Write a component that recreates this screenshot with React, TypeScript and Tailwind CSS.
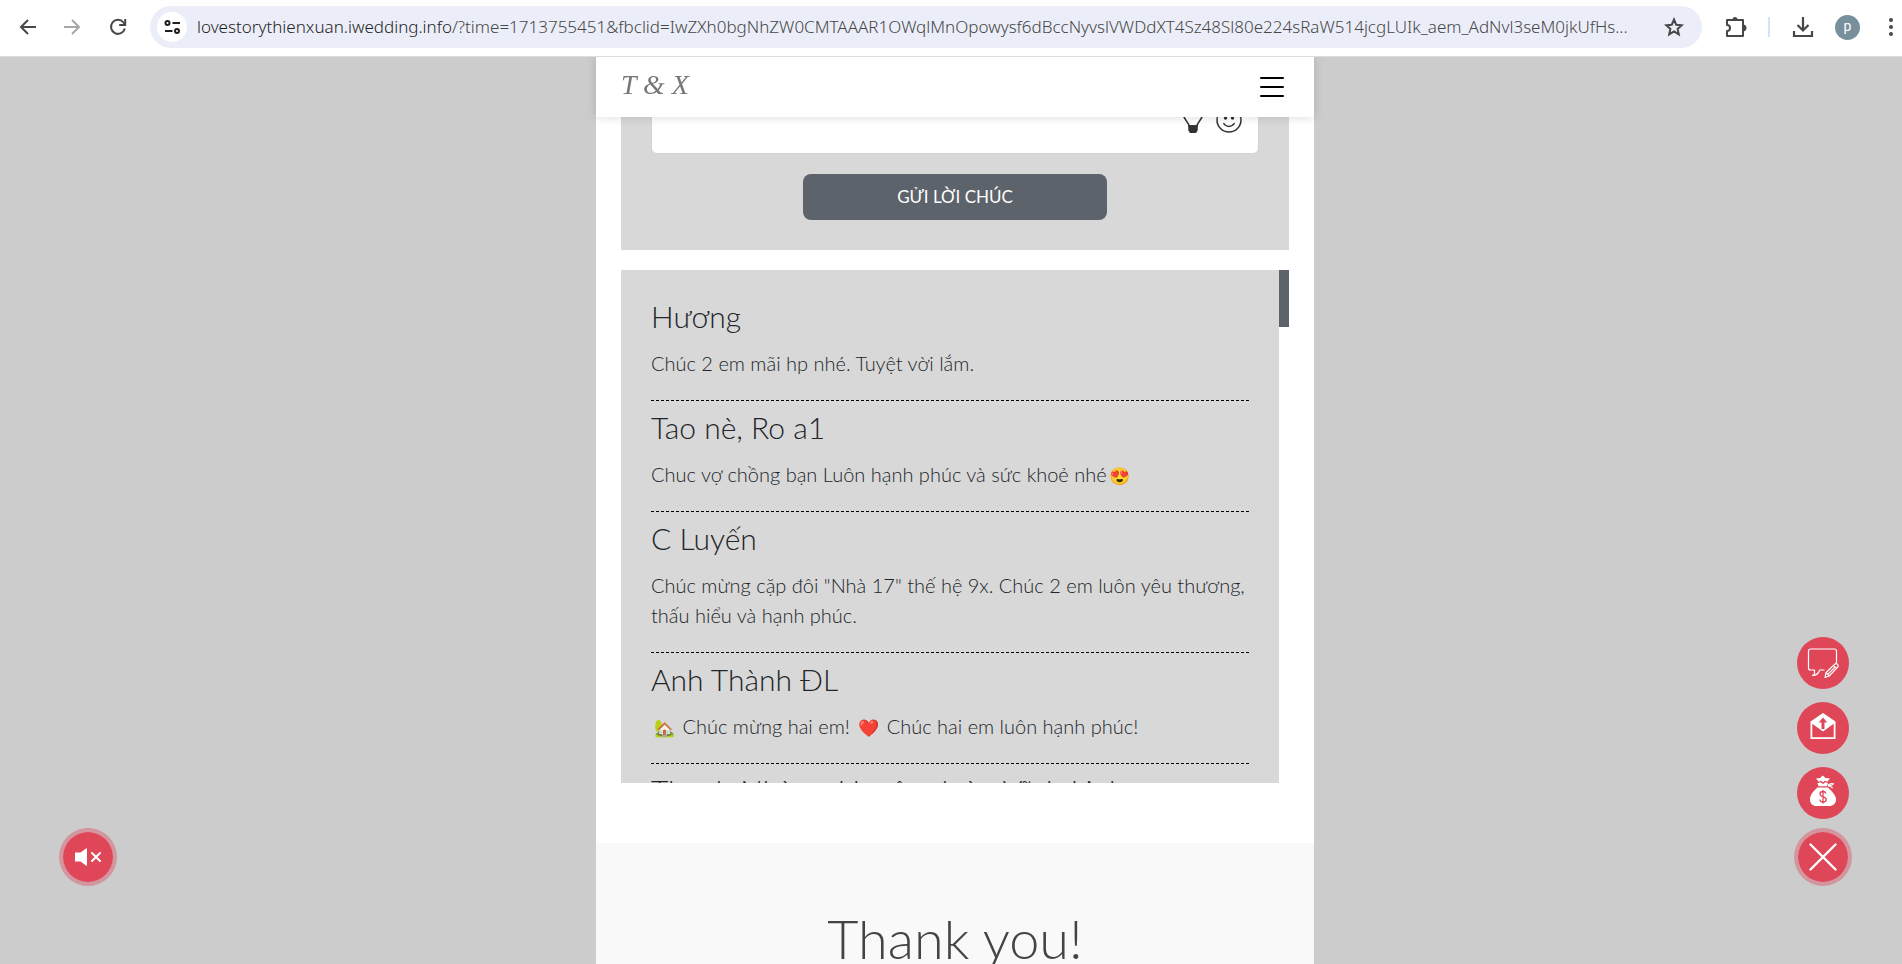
import React from "react";

interface Wish {
  name: string;
  message: React.ReactNode;
}

const Emoji: React.FC<{ children: string }> = ({ children }) => (
  <span className="inline-block w-[26px] text-center text-[17px] leading-none">{children}</span>
);

const wishes: Wish[] = [
  { name: "Hương", message: "Chúc 2 em mãi hp nhé. Tuyệt vời lắm." },
  {
    name: "Tao nè, Ro a1",
    message: (
      <>
        Chuc vợ chồng bạn Luôn hạnh phúc và sức khoẻ nhé
        <Emoji>😍</Emoji>
      </>
    ),
  },
  {
    name: "C Luyến",
    message: 'Chúc mừng cặp đôi "Nhà 17" thế hệ 9x. Chúc 2 em luôn yêu thương, thấu hiểu và hạnh phúc.',
  },
  {
    name: "Anh Thành ĐL",
    message: (
      <>
        <Emoji>🏡</Emoji> Chúc mừng hai em! <Emoji>❤️</Emoji> Chúc hai em luôn hạnh phúc!
      </>
    ),
  },
  { name: "Thanh Nhàn - Huyên đoàn Vĩnh Linh", message: "" },
];

const pageUrl =
  "/?time=1713755451&fbclid=IwZXh0bgNhZW0CMTAAAR1OWqlMnOpowysf6dBccNyvslVWDdXT4Sz48Sl80e224sRaW514jcgLUIk_aem_AdNvl3seM0jkUfHs...";

const BrowserBar = () => (
  <div className="flex h-[57px] shrink-0 items-center border-b border-[#dddddd] bg-white pb-[2px] text-[#474747]">
    <button aria-label="Back" className="ml-4 flex size-6 items-center justify-center">
      <svg width="18" height="18" viewBox="0 0 18 18" fill="none" stroke="currentColor" strokeWidth="2">
        <path d="M17 9H2.5M9 2 2 9l7 7" />
      </svg>
    </button>
    <button aria-label="Forward" className="ml-5 flex size-6 items-center justify-center text-[#a6a6a6]">
      <svg width="18" height="18" viewBox="0 0 18 18" fill="none" stroke="currentColor" strokeWidth="2">
        <path d="M1 9h14.500M9 2l7 7-7 7" />
      </svg>
    </button>
    <button aria-label="Reload" className="ml-[22px] flex size-6 items-center justify-center">
      <svg width="18" height="18" viewBox="0 0 18 18" fill="none" stroke="currentColor" strokeWidth="2">
        <path d="M15.800 10.500A7 7 0 1 1 14.500 4.500L16 6.500" />
        <path d="M16.200 1v6h-6" />
      </svg>
    </button>
    <div className="ml-5 flex h-[42px] min-w-0 flex-1 items-center rounded-full bg-[#ebeef8] pl-[7px] pr-4">
      <button aria-label="Site information" className="flex size-[30px] shrink-0 items-center justify-center rounded-full bg-white text-[#1f1f1f]">
        <svg width="17" height="14" viewBox="0 0 17 14" fill="none" stroke="currentColor" strokeWidth="2">
          <circle cx="3.500" cy="3" r="2" />
          <path d="M8.500 3H16M1 11h7.500" />
          <circle cx="13" cy="11" r="2" />
        </svg>
      </button>
      <span className="ml-[10px] min-w-0 flex-1 overflow-hidden whitespace-nowrap font-['Noto_Sans',sans-serif] text-[17px] font-light">
        <span className="text-[#1f1f1f]">lovestorythienxuan.iwedding.info</span>
        {pageUrl}
      </span>
      <button aria-label="Bookmark" className="ml-3 flex size-6 shrink-0 items-center justify-center">
        <svg width="20" height="20" viewBox="0 0 20 20" fill="none" stroke="currentColor" strokeWidth="2">
          <path d="m10 2.500 2.200 5.200 5.600.5-4.200 3.700 1.200 5.500L10 14.500l-4.800 2.900 1.200-5.500-4.200-3.700 5.600-.5z" />
        </svg>
      </button>
    </div>
    <button aria-label="Extensions" className="ml-[22px] flex size-6 shrink-0 items-center justify-center">
      <svg width="22" height="24" viewBox="0 0 22 24" fill="none" stroke="currentColor" strokeWidth="2">
        <path d="M2 5h16v5.500a2.600 2.600 0 0 1 0 5V21H2v-5a2.900 2.900 0 0 0 0-6z" strokeLinejoin="round" />
        <path d="M7.500 4.500a2.500 2.500 0 0 1 5 0z" fill="currentColor" stroke="none" />
        <path d="M18 10.500a2.500 2.500 0 0 1 0 5z" fill="currentColor" />
      </svg>
    </button>
    <span className="ml-5 h-5 w-[2px] shrink-0 bg-[#d3e3fd]" />
    <button aria-label="Downloads" className="ml-[21px] flex size-6 shrink-0 items-center justify-center">
      <svg width="22" height="22" viewBox="0 0 22 22" fill="none" stroke="currentColor" strokeWidth="2.200">
        <path d="M11 1v13M5.500 9 11 14.500 16.500 9M2 15v5h18v-5" />
      </svg>
    </button>
    <button className="ml-5 flex size-[25px] shrink-0 items-center justify-center rounded-full bg-[#78909c] pb-[2px] font-['Roboto',sans-serif] text-sm leading-none text-white">
      p
    </button>
    <button aria-label="Menu" className="ml-[25px] mr-[5px] flex w-3 shrink-0 justify-center">
      <svg width="4" height="18" viewBox="0 0 4 18" fill="currentColor">
        <circle cx="2" cy="2" r="2" />
        <circle cx="2" cy="9" r="2" />
        <circle cx="2" cy="16" r="2" />
      </svg>
    </button>
  </div>
);

const Header = () => (
  <header className="sticky top-0 z-10 flex h-[60px] items-center justify-between bg-white pl-[25px] pr-7 shadow-[0_0_10px_rgba(0,0,0,0.15)]">
    <a href="#top" className="pb-1 font-['Liberation_Serif',cursive] text-[28px] italic leading-none text-[#777777]">
      T &amp; X
    </a>
    <button aria-label="Open navigation" className="flex w-[28px] flex-col items-center gap-[7px]">
      <span className="h-[2px] w-6 rounded-full bg-black" />
      <span className="h-[2px] w-6 rounded-full bg-black" />
      <span className="h-[2px] w-6 rounded-full bg-black" />
    </button>
  </header>
);

const WishForm = () => (
  <form className="mx-[25px] -mt-[60px] flex flex-col items-center bg-[#d8d8d8] px-[30px] pb-[30px] pt-2" onSubmit={(e) => e.preventDefault()}>
    <div className="relative w-full">
      <textarea aria-label="Lời chúc" className="block h-[89px] w-full resize-none rounded-md border border-[#ced4da] bg-white p-3 outline-none" />
      <div className="absolute bottom-[21px] right-[17px] flex items-end gap-3 text-[#333333]">
        <button type="button" aria-label="Gợi ý lời chúc">
          <svg width="22" height="28" viewBox="0 0 22 28" fill="none" stroke="currentColor" strokeWidth="1.500">
            <path d="M7 21c0-4-5.500-6-5.500-11.500a9.500 9.500 0 0 1 19 0C20.500 15 15 17 15 21z" />
            <path d="M7 21h8v4l-1.500 2.500h-5L7 25z" fill="currentColor" />
          </svg>
        </button>
        <button type="button" aria-label="Biểu tượng cảm xúc">
          <svg width="26" height="26" viewBox="0 0 26 26" fill="none" stroke="currentColor" strokeWidth="1.500">
            <circle cx="13" cy="13" r="12" />
            <circle cx="9.500" cy="11" r="1.700" fill="currentColor" stroke="none" />
            <circle cx="16.500" cy="11" r="1.700" fill="currentColor" stroke="none" />
            <path d="M7.500 16c2.500 4.500 8.500 4.500 11 0" />
          </svg>
        </button>
      </div>
    </div>
    <button type="submit" className="mt-5 h-[46px] w-1/2 rounded-lg bg-[#5d636b] pb-px text-[17px] font-normal text-white">
      GỬI LỜI CHÚC
    </button>
  </form>
);

const WishList = () => (
  <section className="mx-[25px] mb-[60px] mt-5 flex items-start">
    <div className="max-h-[513px] min-w-0 flex-1 overflow-hidden bg-[#d8d8d8] px-[30px] pt-7 text-[#212529]">
      {wishes.map((wish) => (
        <article key={wish.name} className="mb-2 border-b border-dashed border-black pb-[22px]">
          <h4 className="mb-[14px] text-[30px] leading-9">{wish.name}</h4>
          <p className="text-xl leading-[30px]">{wish.message}</p>
        </article>
      ))}
    </div>
    <div className="h-[57px] w-[10px] bg-[#5d636b]" />
  </section>
);

const ringClass =
  "flex size-[58px] items-center justify-center rounded-full border-4 border-[#df4759]/40 bg-[#df4759] bg-clip-padding text-white";
const roundClass = "flex size-[52px] items-center justify-center rounded-full bg-[#df4759] text-white";

const ActionButtons = () => (
  <div className="fixed bottom-[78px] right-[50px] flex flex-col items-center">
    <button aria-label="Gửi lời chúc" className={`${roundClass} mb-[13px]`}>
      <svg width="32" height="32" viewBox="0 0 32 32" fill="none" stroke="currentColor" strokeWidth="1.200" strokeLinejoin="round">
        <path d="M29.500 16V4a2 2 0 0 0-2-2h-24a2 2 0 0 0-2 2v17a2 2 0 0 0 2 2h4v3.200q0 1.800-2 2.300 5 .3 7.300-5.500h4.700" />
        <path d="m18 30.500 1-4.800 8.500-8.300a2 2 0 0 1 3 0 2 2 0 0 1 0 3l-8.300 8.600zM19 25.700l3.200 3.300M26.500 18.400l3 3M21 27.200l7.200-7.200" />
      </svg>
    </button>
    <button aria-label="Thiệp mời" className={`${roundClass} mb-[13px] pb-1`}>
      <svg width="26" height="28" viewBox="0 0 26 28">
        <path d="M.5 9.500 13 1l12.500 8.500V27H.5z" fill="#ffffff" />
        <path d="M2.300 11.800 13 19.500l10.700-7.700v13.500H2.300z" fill="#df4759" />
        <path d="m13 5.500 4.300 5h-2.800V17h-3v-6.500H8.700z" fill="#df4759" />
      </svg>
    </button>
    <button aria-label="Mừng cưới" className={`${roundClass} mb-[9px] pb-1`}>
      <svg width="28" height="32" viewBox="0 0 28 32">
        <path d="M8.500 12.500h10.500c4 4 8 8 8 12 0 4-3 6.500-6.500 6.500h-13C3.500 31 1 28.500 1 24.500c0-5 3.500-8.500 7.500-12z" fill="#ffffff" />
        <path d="M7 3.500 11 3l2.800-2.500L16.500 3l4.500.5-2.800 3.200-2.200-1-1.700 1.500-2.300-1.500-2.300 1zM8.500 8.300l3-1 2.700 1.700 2.300-1.700 2.500 1-1 2.900H9.500z" fill="#ffffff" />
        <path d="M19 10.200c2-2 3.500-2 5.500-1.400-.5 1.200-2.500 1.700-5.500 1.900m0 .3c3 0 4 .8 4.500 2.200" fill="none" stroke="#ffffff" strokeWidth="1.100" />
        <path d="M17 18.500c-.5-1.500-1.500-2-3-2-1.700 0-3 1-3 2.600 0 3.500 6.200 2 6.200 5.400 0 1.600-1.400 2.500-3.200 2.500-1.700 0-3-.8-3.200-2.500M14 15v13.500" fill="none" stroke="#df4759" strokeWidth="1.300" />
      </svg>
    </button>
    <button aria-label="Đóng" className={ringClass}>
      <svg width="28" height="28" viewBox="0 0 28 28" fill="none" stroke="currentColor" strokeWidth="2.400" strokeLinecap="round">
        <path d="m1.500 1.500 25 25M26.500 1.500l-25 25" />
      </svg>
    </button>
  </div>
);

const SoundButton = () => (
  <button aria-label="Bật nhạc" className={`${ringClass} fixed bottom-[78px] left-[59px]`}>
    <svg width="26" height="18" viewBox="0 0 26 18">
      <path d="M0 4.500h5.500L11 .5q1-.5 1 .5v16q0 1-1 .5l-5.500-4H0z" fill="currentColor" />
      <path d="m17 5 8 8M25 5l-8 8" stroke="currentColor" strokeWidth="2" strokeLinecap="round" />
    </svg>
  </button>
);

const App = () => (
  <div className="flex h-screen flex-col overflow-hidden bg-[#cccccc]">
    <BrowserBar />
    <div className="min-h-0 flex-1 overflow-hidden pl-2">
      <main className="mx-auto max-w-[718px] bg-white font-['Lato',sans-serif] font-light">
        <Header />
        <WishForm />
        <WishList />
        <footer className="bg-[#f9f9f9] pb-20 pt-16 text-center">
          <h2 className="text-[54px] leading-[64px] text-[#444444]">Thank you!</h2>
        </footer>
      </main>
    </div>
    <SoundButton />
    <ActionButtons />
  </div>
);

export default App;
